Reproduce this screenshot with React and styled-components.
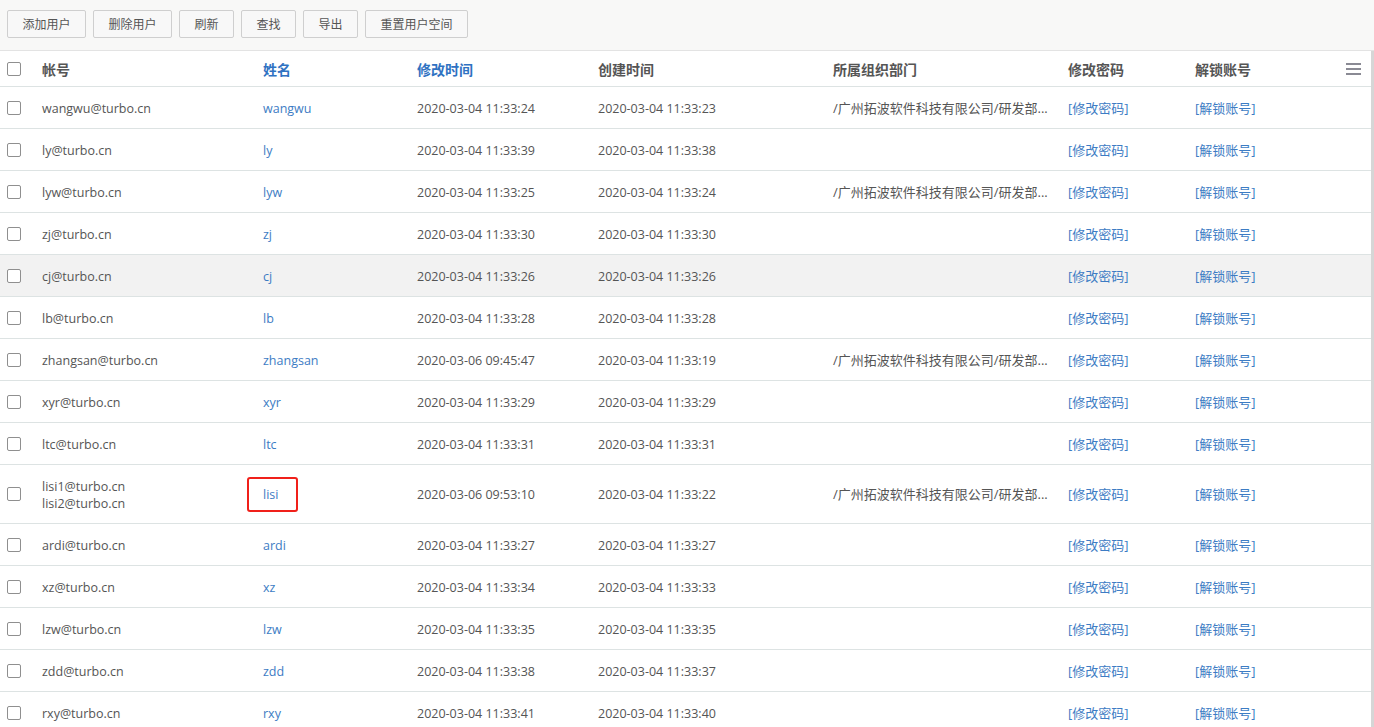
import React from 'react'
import styled, { createGlobalStyle } from 'styled-components'

const Global = createGlobalStyle`
html, body {
  margin: 0;
  padding: 0;
  overflow: hidden;
  background: #ffffff;
}
body {
  font-family: "Open Sans", "Noto Sans CJK SC", sans-serif;
  font-size: 13px;
  color: #555;
}
`;

const Page = styled.div`
width: 1374px;
height: 727px;
overflow: hidden;
`;

const Toolbar = styled.div`
height: 51px;
box-sizing: border-box;
background: #f8f8f7;
border-bottom: 1px solid #e3e3e3;
display: flex;
align-items: flex-start;
gap: 7px;
padding: 10px 7px 0;
`;

const Button = styled.button`
height: 28px;
padding: 0 14.5px;
background: #f8f8f8;
border: 1px solid #cfcfcf;
border-radius: 2px;
font-family: inherit;
font-size: 12px;
color: #555;
cursor: pointer;
`;

const Body = styled.div`
border-right: 3px solid #d6d6d6;
`;

const Table = styled.table`
width: 1371px;
table-layout: fixed;
border-collapse: collapse;
`;

const Th = styled.th`
height: 35px;
padding: 0 ${props => props.menu ? 10 : 12}px 0 12px;
text-align: left;
font-size: 14px;
font-weight: 600;
color: ${props => props.sort ? '#2f72c2' : '#555'};
border-bottom: 1px solid #dde3e3;
white-space: nowrap;
`;

const Tr = styled.tr`
background: ${props => props.hover ? '#f2f2f2' : '#fff'};
`;

const Td = styled.td`
height: ${props => props.tall ? 57 : 40}px;
padding: 1px ${props => props.tight ? 0 : 12}px 0 12px;
border-bottom: 1px solid #dde3e3;
font-size: ${props => props.latin ? 12.5 : 13}px;
color: ${props => props.link ? '#3d7cc4' : '#555'};
white-space: nowrap;
line-height: 17px;
`;

const BoxCell = styled.td`
padding: 0 0 0 7px;
border-bottom: 1px solid #dde3e3;
`;

const BoxHead = styled.th`
padding: 0 0 0 7px;
border-bottom: 1px solid #dde3e3;
text-align: left;
`;

const Check = styled.span`
display: block;
width: 12px;
height: 12px;
border: 1px solid #8f8f8f;
border-radius: 2px;
background: #fff;
`;

const Marked = styled.span`
display: block;
box-sizing: border-box;
width: 51px;
height: 35px;
line-height: 31px;
margin-left: -16px;
padding-left: 14px;
border: 2px solid #f0201a;
border-radius: 3px;
`;

const Menu = styled.svg`
display: block;
margin-left: auto;
`;

const rows = [
  ['wangwu@turbo.cn', 'wangwu', '2020-03-04 11:33:24', '2020-03-04 11:33:23', true],
  ['ly@turbo.cn', 'ly', '2020-03-04 11:33:39', '2020-03-04 11:33:38'],
  ['lyw@turbo.cn', 'lyw', '2020-03-04 11:33:25', '2020-03-04 11:33:24', true],
  ['zj@turbo.cn', 'zj', '2020-03-04 11:33:30', '2020-03-04 11:33:30'],
  ['cj@turbo.cn', 'cj', '2020-03-04 11:33:26', '2020-03-04 11:33:26', false, true],
  ['lb@turbo.cn', 'lb', '2020-03-04 11:33:28', '2020-03-04 11:33:28'],
  ['zhangsan@turbo.cn', 'zhangsan', '2020-03-06 09:45:47', '2020-03-04 11:33:19', true],
  ['xyr@turbo.cn', 'xyr', '2020-03-04 11:33:29', '2020-03-04 11:33:29'],
  ['ltc@turbo.cn', 'ltc', '2020-03-04 11:33:31', '2020-03-04 11:33:31'],
  ['lisi1@turbo.cn|lisi2@turbo.cn', 'lisi', '2020-03-06 09:53:10', '2020-03-04 11:33:22', true],
  ['ardi@turbo.cn', 'ardi', '2020-03-04 11:33:27', '2020-03-04 11:33:27'],
  ['xz@turbo.cn', 'xz', '2020-03-04 11:33:34', '2020-03-04 11:33:33'],
  ['lzw@turbo.cn', 'lzw', '2020-03-04 11:33:35', '2020-03-04 11:33:35'],
  ['zdd@turbo.cn', 'zdd', '2020-03-04 11:33:38', '2020-03-04 11:33:37'],
  ['rxy@turbo.cn', 'rxy', '2020-03-04 11:33:41', '2020-03-04 11:33:40'],
]

const ORG = '/广州拓波软件科技有限公司/研发部...'

export default function App() {
  return (
    <Page>
      <Global />
      <Toolbar>
        <Button>添加用户</Button>
        <Button>删除用户</Button>
        <Button>刷新</Button>
        <Button>查找</Button>
        <Button>导出</Button>
        <Button>重置用户空间</Button>
      </Toolbar>
      <Body>
        <Table>
          <colgroup>
            <col style={{ width: 30 }} />
            <col style={{ width: 221 }} />
            <col style={{ width: 154 }} />
            <col style={{ width: 181 }} />
            <col style={{ width: 235 }} />
            <col style={{ width: 235 }} />
            <col style={{ width: 127 }} />
            <col style={{ width: 147 }} />
            <col style={{ width: 41 }} />
          </colgroup>
          <thead>
            <tr>
              <BoxHead><Check /></BoxHead>
              <Th>帐号</Th>
              <Th sort>姓名</Th>
              <Th sort>修改时间</Th>
              <Th>创建时间</Th>
              <Th>所属组织部门</Th>
              <Th>修改密码</Th>
              <Th>解锁账号</Th>
              <Th menu>
                <Menu width="15" height="12" viewBox="0 0 15 12">
                  <rect x="0" y="0" width="15" height="2" fill="#8a8a94" />
                  <rect x="0" y="5" width="15" height="2" fill="#8a8a94" />
                  <rect x="0" y="10" width="15" height="2" fill="#8a8a94" />
                </Menu>
              </Th>
            </tr>
          </thead>
          <tbody>
            {rows.map(([acc, name, mod, created, org, hover]) => {
              const tall = acc.includes('|')
              return (
                <Tr key={name} hover={hover}>
                  <BoxCell><Check /></BoxCell>
                  <Td tall={tall} latin>
                    {acc.split('|').map(a => <div key={a}>{a}</div>)}
                  </Td>
                  <Td tall={tall} latin link>
                    {name === 'lisi' ? <Marked>{name}</Marked> : name}
                  </Td>
                  <Td tall={tall} latin>{mod}</Td>
                  <Td tall={tall} latin>{created}</Td>
                  <Td tall={tall} tight>{org ? ORG : ''}</Td>
                  <Td tall={tall} link>[修改密码]</Td>
                  <Td tall={tall} link>[解锁账号]</Td>
                  <Td tall={tall} />
                </Tr>
              )
            })}
          </tbody>
        </Table>
      </Body>
    </Page>
  )
}
